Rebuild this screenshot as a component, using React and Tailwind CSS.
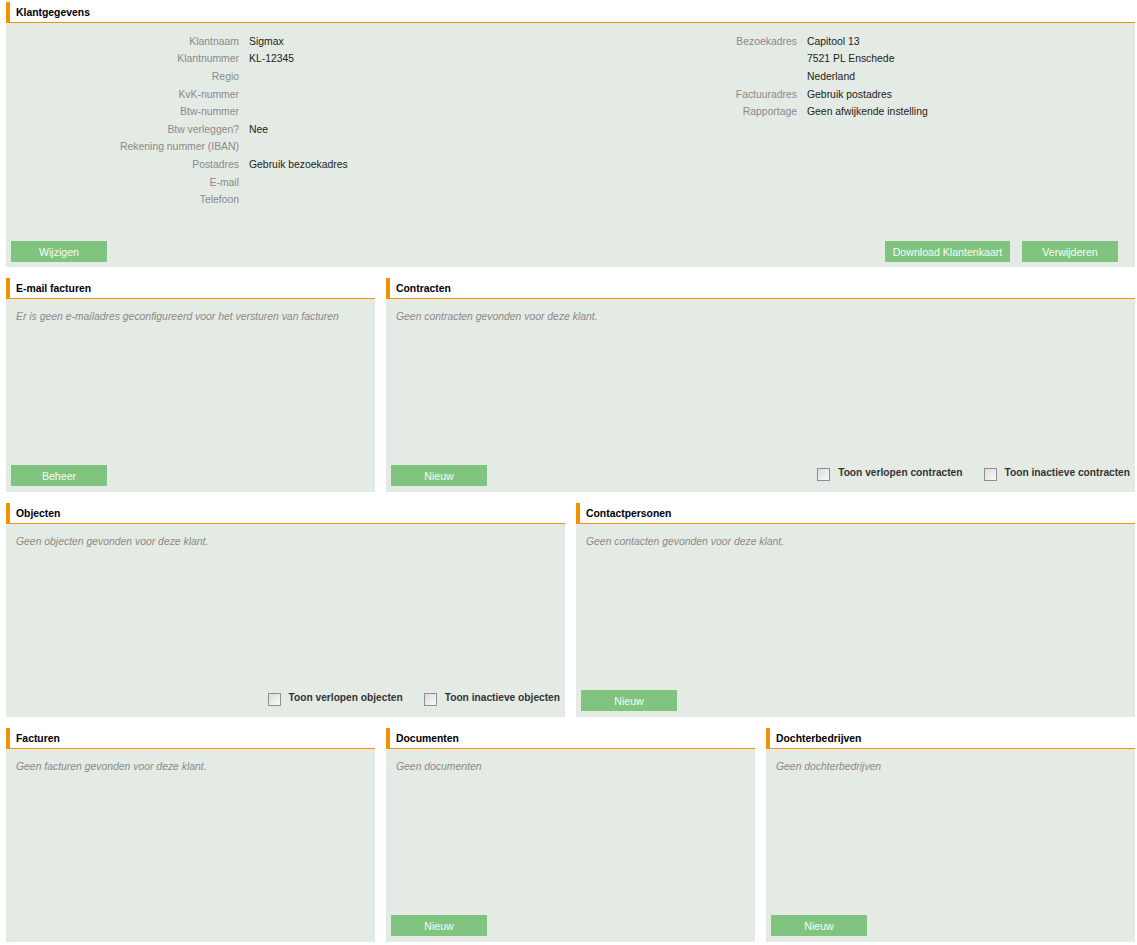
const font = { fontFamily: '"Liberation Sans", Arial, sans-serif' };

const Panel = ({ title, className = "", bodyClass = "", children }) => (
  <div className={`flex flex-col ${className}`}>
    <div className="h-[21px] border-b border-[#f39200] flex">
      <div className="w-[4px] bg-[#f39200]" />
      <div className="pl-[6px] pt-[4px] text-[10.4px] font-bold text-black leading-[14px]">{title}</div>
    </div>
    <div className={`flex-1 bg-[#e4ebe4] flex flex-col ${bodyClass}`}>{children}</div>
  </div>
);

const Button = ({ children, className = "w-[96px]" }) => (
  <button className={`${className} h-[21px] bg-[#80c480] text-[10.6px] text-[#f4fff4] leading-[22px] text-center`}>
    {children}
  </button>
);

const Empty = ({ children }) => (
  <div className="px-[10px] pt-[11px] text-[10.4px] italic text-[#8a8a8a] leading-[14px]">{children}</div>
);

const Check = ({ label }) => (
  <label className="flex items-center gap-[8px] text-[10.2px] font-bold text-[#333] leading-[14px]">
    <span className="w-[13px] h-[13px] mt-[3px] border border-[#8f8f8f] bg-gradient-to-br from-[#dcdcdc] to-[#fafafa] inline-block" />
    {label}
  </label>
);

const Row = ({ label, value, labelW }) => (
  <div className="flex h-[17.6px] items-center text-[10.4px] leading-[14px]">
    <div className={`${labelW} text-right text-[#8a8a8a]`}>{label}</div>
    <div className="ml-[10px] text-[#222]">{value}</div>
  </div>
);

export default function App() {
  const left = [
    ["Klantnaam", "Sigmax"],
    ["Klantnummer", "KL-12345"],
    ["Regio", ""],
    ["KvK-nummer", ""],
    ["Btw-nummer", ""],
    ["Btw verleggen?", "Nee"],
    ["Rekening nummer (IBAN)", ""],
    ["Postadres", "Gebruik bezoekadres"],
    ["E-mail", ""],
    ["Telefoon", ""],
  ];
  const right = [
    ["Bezoekadres", "Capitool 13"],
    ["", "7521 PL Enschede"],
    ["", "Nederland"],
    ["Factuuradres", "Gebruik postadres"],
    ["Rapportage", "Geen afwijkende instelling"],
  ];

  return (
    <div className="bg-white min-h-[945px] w-[1137px]" style={font}>
      <div className="pt-[2px] pl-[6px] w-[1135px] flex flex-col gap-[11px]">
        <Panel title="Klantgegevens" className="h-[265px]" bodyClass="px-[5px] pb-[5px]">
          <div className="flex pt-[10px]">
            <div className="w-[559px]">
              {left.map(([l, v]) => (
                <Row key={l} label={l} value={v} labelW="w-[228px]" />
              ))}
            </div>
            <div className="flex-1">
              {right.map(([l, v], i) => (
                <Row key={i} label={l} value={v} labelW="w-[227px]" />
              ))}
            </div>
          </div>
          <div className="mt-auto flex items-center">
            <Button>Wijzigen</Button>
            <div className="ml-auto flex gap-[12px] pr-[12px]">
              <Button className="w-[125px]">Download Klantenkaart</Button>
              <Button>Verwijderen</Button>
            </div>
          </div>
        </Panel>

        <div className="flex gap-[11px] h-[214px]">
          <Panel title="E-mail facturen" className="w-[369px]" bodyClass="pb-[6px]">
            <Empty>Er is geen e-mailadres geconfigureerd voor het versturen van facturen</Empty>
            <div className="mt-auto px-[5px] flex">
              <Button>Beheer</Button>
            </div>
          </Panel>
          <Panel title="Contracten" className="flex-1" bodyClass="pb-[6px]">
            <Empty>Geen contracten gevonden voor deze klant.</Empty>
            <div className="mt-auto pl-[5px] flex items-start">
              <Button>Nieuw</Button>
              <div className="ml-auto flex gap-[21px] pr-[5px]">
                <Check label="Toon verlopen contracten" />
                <Check label="Toon inactieve contracten" />
              </div>
            </div>
          </Panel>
        </div>

        <div className="flex gap-[11px] h-[214px]">
          <Panel title="Objecten" className="flex-1" bodyClass="pb-[11px]">
            <Empty>Geen objecten gevonden voor deze klant.</Empty>
            <div className="mt-auto flex justify-end gap-[21px] pr-[5px]">
              <Check label="Toon verlopen objecten" />
              <Check label="Toon inactieve objecten" />
            </div>
          </Panel>
          <Panel title="Contactpersonen" className="flex-1" bodyClass="pb-[6px]">
            <Empty>Geen contacten gevonden voor deze klant.</Empty>
            <div className="mt-auto px-[5px] flex">
              <Button>Nieuw</Button>
            </div>
          </Panel>
        </div>

        <div className="flex gap-[11px] h-[214px]">
          <Panel title="Facturen" className="flex-1" bodyClass="pb-[6px]">
            <Empty>Geen facturen gevonden voor deze klant.</Empty>
          </Panel>
          <Panel title="Documenten" className="flex-1" bodyClass="pb-[6px]">
            <Empty>Geen documenten</Empty>
            <div className="mt-auto px-[5px] flex">
              <Button>Nieuw</Button>
            </div>
          </Panel>
          <Panel title="Dochterbedrijven" className="flex-1" bodyClass="pb-[6px]">
            <Empty>Geen dochterbedrijven</Empty>
            <div className="mt-auto px-[5px] flex">
              <Button>Nieuw</Button>
            </div>
          </Panel>
        </div>
      </div>
    </div>
  );
}
